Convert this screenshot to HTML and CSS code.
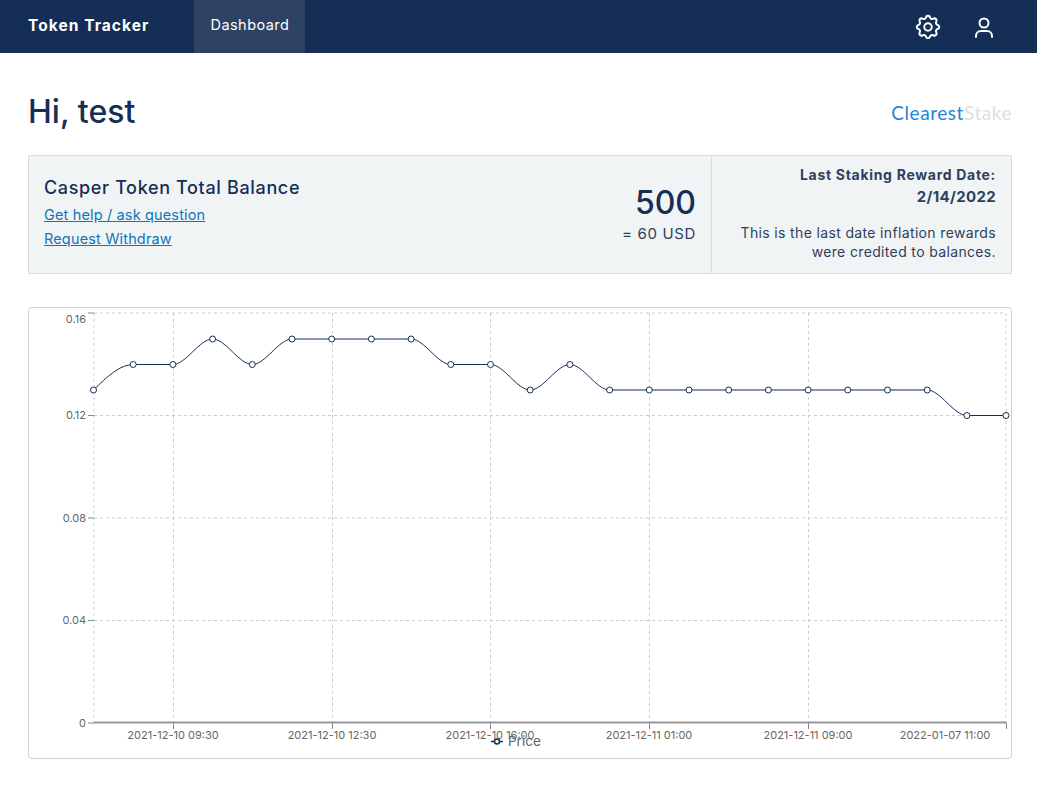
FILE: index.html
```html
<!DOCTYPE html>
<html lang="en">
<head>
  <meta charset="UTF-8" />
  <meta name="viewport" content="width=device-width, initial-scale=1" />
  <title>Token Tracker</title>
  <link rel="stylesheet" href="styles.css">
</head>
<body>
  <nav class="navbar">
    <a class="brand" href="#">Token Tracker</a>
    <a class="nav-item" href="#">Dashboard</a>
    <div class="nav-icons">
      <a class="nav-icon" href="#" aria-label="Settings">
        <svg width="30" height="30" viewBox="0 0 24 24" fill="none" stroke="currentColor" stroke-width="1.6" stroke-linecap="round" stroke-linejoin="round">
          <path d="M10.325 4.317c.426-1.756 2.924-1.756 3.35 0a1.724 1.724 0 002.573 1.066c1.543-.94 3.31.826 2.37 2.37a1.724 1.724 0 001.065 2.572c1.756.426 1.756 2.924 0 3.35a1.724 1.724 0 00-1.066 2.573c.94 1.543-.826 3.31-2.37 2.37a1.724 1.724 0 00-2.572 1.065c-.426 1.756-2.924 1.756-3.35 0a1.724 1.724 0 00-2.573-1.066c-1.543.94-3.31-.826-2.37-2.37a1.724 1.724 0 00-1.065-2.572c-1.756-.426-1.756-2.924 0-3.35a1.724 1.724 0 001.066-2.573c-.94-1.543.826-3.31 2.37-2.37.996.608 2.296.07 2.572-1.065z"/>
          <path d="M15 12a3 3 0 11-6 0 3 3 0 016 0z"/>
        </svg>
      </a>
      <a class="nav-icon" href="#" aria-label="Account">
        <svg width="24" height="24" viewBox="0 0 24 24" fill="none" stroke="currentColor" stroke-width="2" stroke-linecap="round" stroke-linejoin="round">
          <circle cx="12" cy="8" r="4.5"/>
          <path d="M4 22v-1a5 5 0 015-5h6a5 5 0 015 5v1"/>
        </svg>
      </a>
    </div>
  </nav>

  <main class="content">
    <header class="page-head">
      <h1>Hi, test</h1>
      <div class="logo"><span class="logo-blue">Clearest</span><span class="logo-grey">Stake</span></div>
    </header>

    <section class="balance-panel">
      <div class="balance-main">
        <div class="balance-info">
          <h2>Casper Token Total Balance</h2>
          <a href="#">Get help / ask question</a>
          <a href="#">Request Withdraw</a>
        </div>
        <div class="balance-value">
          <div class="amount">500</div>
          <div class="usd">= 60 USD</div>
        </div>
      </div>
      <div class="balance-side">
        <div class="side-title">Last Staking Reward Date:</div>
        <div class="side-date">2/14/2022</div>
        <p>This is the last date inflation rewards were credited to balances.</p>
      </div>
    </section>

    <section class="chart-card">
      <svg class="chart" width="982" height="450" viewBox="29 308 982 450">
        <g class="grid">
          <line x1="94" y1="313" x2="1006" y2="313"/>
          <line x1="94" y1="415.5" x2="1006" y2="415.5"/>
          <line x1="94" y1="518" x2="1006" y2="518"/>
          <line x1="94" y1="620.5" x2="1006" y2="620.5"/>
          <line x1="94" y1="313" x2="94" y2="723"/>
          <line x1="173.5" y1="313" x2="173.5" y2="723"/>
          <line x1="332.5" y1="313" x2="332.5" y2="723"/>
          <line x1="490.5" y1="313" x2="490.5" y2="723"/>
          <line x1="649.5" y1="313" x2="649.5" y2="723"/>
          <line x1="808.5" y1="313" x2="808.5" y2="723"/>
          <line x1="1006" y1="313" x2="1006" y2="723"/>
        </g>
        <g class="axis">
          <line class="axis-base" x1="94" y1="722.5" x2="1006.5" y2="722.5"/>
          <line x1="88" y1="313" x2="94" y2="313"/>
          <line x1="88" y1="415.5" x2="94" y2="415.5"/>
          <line x1="88" y1="518" x2="94" y2="518"/>
          <line x1="88" y1="620.5" x2="94" y2="620.5"/>
          <line x1="88" y1="723" x2="94" y2="723"/>
          <line x1="173.5" y1="723" x2="173.5" y2="729"/>
          <line x1="332.5" y1="723" x2="332.5" y2="729"/>
          <line x1="490.5" y1="723" x2="490.5" y2="729"/>
          <line x1="649.5" y1="723" x2="649.5" y2="729"/>
          <line x1="808.5" y1="723" x2="808.5" y2="729"/>
          <line x1="1006.5" y1="723" x2="1006.5" y2="729"/>
        </g>
        <g class="tick-y">
          <text x="86" y="323">0.16</text>
          <text x="86" y="419">0.12</text>
          <text x="86" y="522">0.08</text>
          <text x="86" y="624">0.04</text>
          <text x="86" y="727">0</text>
        </g>
        <g class="tick-x">
          <text x="173" y="739">2021-12-10 09:30</text>
          <text x="332" y="739">2021-12-10 12:30</text>
          <text x="490" y="739">2021-12-10 16:00</text>
          <text x="649" y="739">2021-12-11 01:00</text>
          <text x="808" y="739">2021-12-11 09:00</text>
          <text x="945" y="739">2022-01-07 11:00</text>
        </g>
        <path class="price-line" d="M93.5 390C106.7 377 120 364.5 133.2 364.5H172.9C186 364.5 199.4 339 212.6 339S239.1 364.5 252.3 364.5 278.8 339 292 339H411.1C424.3 339 437.6 364.5 450.8 364.5H490.5C503.7 364.5 517 390 530.2 390S556.7 364.5 569.9 364.5 596.4 390 609.6 390H927.2C940.4 390 953.7 415.5 966.9 415.5H1006"/>
        <g class="dots">
          <circle cx="93.5" cy="390" r="3"/>
          <circle cx="133.2" cy="364.5" r="3"/>
          <circle cx="172.9" cy="364.5" r="3"/>
          <circle cx="212.6" cy="339" r="3"/>
          <circle cx="252.3" cy="364.5" r="3"/>
          <circle cx="292" cy="339" r="3"/>
          <circle cx="331.7" cy="339" r="3"/>
          <circle cx="371.4" cy="339" r="3"/>
          <circle cx="411.1" cy="339" r="3"/>
          <circle cx="450.8" cy="364.5" r="3"/>
          <circle cx="490.5" cy="364.5" r="3"/>
          <circle cx="530.2" cy="390" r="3"/>
          <circle cx="569.9" cy="364.5" r="3"/>
          <circle cx="609.6" cy="390" r="3"/>
          <circle cx="649.3" cy="390" r="3"/>
          <circle cx="689" cy="390" r="3"/>
          <circle cx="728.7" cy="390" r="3"/>
          <circle cx="768.4" cy="390" r="3"/>
          <circle cx="808.1" cy="390" r="3"/>
          <circle cx="847.8" cy="390" r="3"/>
          <circle cx="887.5" cy="390" r="3"/>
          <circle cx="927.2" cy="390" r="3"/>
          <circle cx="966.9" cy="415.5" r="3"/>
          <circle cx="1006" cy="415.5" r="3"/>
        </g>
        <g class="legend">
          <line x1="491" y1="741.5" x2="503" y2="741.5"/>
          <circle cx="497" cy="741.5" r="2.5"/>
          <text x="508" y="746">Price</text>
        </g>
      </svg>
    </section>
  </main>
</body>
</html>
```

FILE: styles.css
```css
* {
  box-sizing: border-box;
}

body {
  margin: 0;
  background: #fff;
  color: #152e55;
  font-family: 'Inter', 'Open Sans', sans-serif;
}

a {
  color: inherit;
  text-decoration: none;
}

.navbar {
  display: flex;
  align-items: stretch;
  height: 53px;
  padding: 0 28px;
  background: #152e55;
  color: #fff;
}

.brand {
  display: flex;
  align-items: center;
  width: 166px;
  padding-bottom: 3px;
  font-size: 15.5px;
  font-weight: 700;
  letter-spacing: 1.05px;
}

.nav-item {
  display: flex;
  align-items: center;
  padding: 0 15.5px 4px 16.5px;
  background: #2e4263;
  font-size: 14.5px;
  letter-spacing: 0.45px;
}

.nav-icons {
  display: flex;
  align-items: center;
  gap: 29px;
  margin-left: auto;
  padding-right: 13px;
}

.nav-icon {
  display: flex;
}

.content {
  padding: 0 25px 0 28px;
}

.page-head {
  display: flex;
  align-items: center;
  justify-content: space-between;
  height: 102px;
  padding-top: 15px;
}

h1 {
  margin: 0;
  font-size: 32px;
  font-weight: 500;
}

.logo {
  margin-top: 1px;
  font-size: 19px;
  font-family: 'Lato', sans-serif;
  font-weight: 400;
  letter-spacing: 0.55px;
}

.logo-blue {
  color: #2186d8;
}

.logo-grey {
  color: #dcdfe1;
}

.balance-panel {
  display: flex;
  height: 119px;
  background: #f1f4f5;
  border: 1px solid #d8dcde;
}

.balance-main {
  display: flex;
  justify-content: space-between;
  width: 683px;
  padding: 20px 15px 0;
  border-right: 1px solid #d8dcde;
}

.balance-info h2 {
  margin: 0 0 3px;
  font-size: 18px;
  font-weight: 500;
  line-height: 24px;
  letter-spacing: 0.65px;
}

.balance-info a {
  display: block;
  color: #0d76bd;
  font-size: 14.5px;
  line-height: 24px;
  letter-spacing: 0.15px;
  text-decoration: underline;
}

.balance-value {
  padding-top: 7px;
  text-align: right;
}

.amount {
  font-size: 32px;
  line-height: 40px;
  font-weight: 500;
}

.usd {
  margin-top: 1px;
  color: #2f3e5c;
  font-size: 15px;
  line-height: 20px;
  letter-spacing: 0.65px;
}

.balance-side {
  flex: 1;
  padding: 9px 15px 0;
  color: #2f3e5c;
  text-align: right;
}

.side-title {
  font-size: 14px;
  font-weight: 700;
  line-height: 20px;
  letter-spacing: 0.7px;
}

.side-date {
  margin-top: 2px;
  font-size: 15px;
  font-weight: 700;
  line-height: 20px;
  letter-spacing: 0.35px;
}

.balance-side p {
  margin: 16px 0 0;
  font-size: 14px;
  line-height: 19px;
  letter-spacing: 0.35px;
}

.chart-card {
  height: 452px;
  margin-top: 33px;
  border: 1px solid #c5d3dc;
  border-radius: 4px;
}

.chart {
  display: block;
}

.grid line {
  stroke: #ccc;
  stroke-dasharray: 3 3;
}

.axis line {
  stroke: #888;
}

.axis .axis-base {
  stroke: #999;
  stroke-width: 2;
}

.tick-y text,
.tick-x text {
  fill: #666;
  font-size: 11px;
}

.tick-y text {
  text-anchor: end;
}

.tick-x text {
  text-anchor: middle;
}

.price-line {
  fill: none;
  stroke: #152e55;
  stroke-width: 1;
}

.dots circle {
  fill: #fff;
  stroke: #152e55;
  stroke-width: 1;
}

.legend line {
  stroke: #152e55;
  stroke-width: 1.5;
}

.legend circle {
  fill: #fff;
  stroke: #152e55;
  stroke-width: 1.5;
}

.legend text {
  fill: #5b6675;
  font-size: 13.5px;
}
```
